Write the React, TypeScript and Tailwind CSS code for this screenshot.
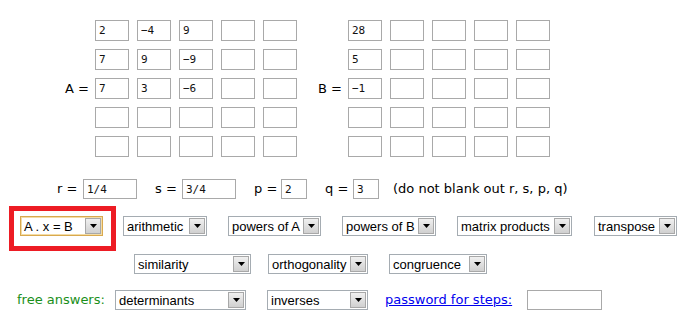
import React from 'react';

const labelFont = "font-['DejaVu_Sans',Verdana,sans-serif]";
const boxFont = "font-['DejaVu_Sans_Mono','Liberation_Mono',monospace]";
const selectFont = "font-['Liberation_Sans',Arial,sans-serif]";

const matA = [
  ['2', '−4', '9', '', ''],
  ['7', '9', '−9', '', ''],
  ['7', '3', '−6', '', ''],
  ['', '', '', '', ''],
  ['', '', '', '', ''],
];

const matB = [
  ['28', '', '', '', ''],
  ['5', '', '', '', ''],
  ['−1', '', '', '', ''],
  ['', '', '', '', ''],
  ['', '', '', '', ''],
];

function Box({ value, className }: { value: string; className: string }) {
  return (
    <input
      readOnly
      defaultValue={value}
      className={`${className} h-[21px] border border-[#a9a9a9] bg-white px-[3px] text-[11px] text-[#111] outline-none ${boxFont}`}
    />
  );
}

function Matrix({ label, values }: { label: string; values: string[][] }) {
  return (
    <div className="flex items-center">
      <span className={`w-[30px] text-[13px] text-black ${labelFont}`}>{label}</span>
      <div className="grid grid-cols-5 gap-x-[8px] gap-y-[8px]">
        {values.flat().map((v, i) => (
          <Box key={i} value={v} className="w-[34px]" />
        ))}
      </div>
    </div>
  );
}

function Select({ label, width, focused }: { label: string; width: string; focused?: boolean }) {
  return (
    <div
      className={`${width} h-[20px] flex items-center justify-between bg-white border ${
        focused ? 'border-[#d9a94e] shadow-[inset_0_0_0_1px_#f3dca6]' : 'border-[#a5acb2]'
      }`}
    >
      <span className={`pl-[3px] text-[13px] leading-none text-black whitespace-nowrap ${selectFont}`}>{label}</span>
      <div className="mr-[1px] w-[16px] h-[16px] flex items-center justify-center border border-[#a8a8a8] bg-gradient-to-b from-[#f0f0f0] to-[#d0d0d0]">
        <svg width="7" height="4" viewBox="0 0 7 4">
          <path d="M0 0h7L3.5 4z" fill="#000" />
        </svg>
      </div>
    </div>
  );
}

function Field({ width, value }: { width: string; value: string }) {
  return (
    <input
      readOnly
      defaultValue={value}
      className={`${width} h-[20px] border border-[#a9a9a9] bg-white px-[3px] text-[11px] text-[#111] outline-none ${boxFont}`}
    />
  );
}

export default function App() {
  return (
    <div className={`w-[686px] h-[331px] bg-white overflow-hidden ${labelFont}`}>
      {/* matrices */}
      <div className="flex pt-[20px] pl-[65px]">
        <Matrix label="A =" values={matA} />
        <div className="ml-[21px]">
          <Matrix label="B =" values={matB} />
        </div>
      </div>

      {/* r, s, p, q */}
      <div className="mt-[22px] pl-[57px] flex items-center h-[20px] text-[13px] text-black">
        <span className="w-[26px]">r =</span>
        <Field width="w-[54px]" value="1/4" />
        <span className="ml-[18px] w-[27px]">s =</span>
        <Field width="w-[54px]" value="3/4" />
        <span className="ml-[18px] w-[27px]">p =</span>
        <Field width="w-[26px]" value="2" />
        <span className="ml-[18px] w-[28px]">q =</span>
        <Field width="w-[26px]" value="3" />
        <span className="ml-[14px] whitespace-nowrap">(do not blank out r, s, p, q)</span>
      </div>

      {/* first row of menus */}
      <div className="mt-[7px] flex items-start">
        <div className="ml-[9px] w-[107px] h-[45px] border-[5px] border-[#ed1c24] pt-[5px] pl-[6px]">
          <Select label="A . x = B" width="w-[83px]" focused />
        </div>
        <div className="ml-[7px] mt-[10px] flex items-center gap-[21px]">
          <Select label="arithmetic" width="w-[84px]" />
          <Select label="powers of A" width="w-[93px]" />
          <Select label="powers of B" width="w-[94px]" />
          <Select label="matrix products" width="w-[115px]" />
          <div className="ml-[1px]">
            <Select label="transpose" width="w-[83px]" />
          </div>
        </div>
      </div>

      {/* second row */}
      <div className="mt-[3px] pl-[134px] flex items-center">
        <Select label="similarity" width="w-[117px]" />
        <div className="ml-[17px]">
          <Select label="orthogonality" width="w-[100px]" />
        </div>
        <div className="ml-[21px]">
          <Select label="congruence" width="w-[98px]" />
        </div>
      </div>

      {/* free answers */}
      <div className="mt-[16px] pl-[17px] flex items-center text-[13px]">
        <span className="w-[98px] text-[#1a8f1a] whitespace-nowrap">free answers:</span>
        <Select label="determinants" width="w-[131px]" />
        <div className="ml-[21px]">
          <Select label="inverses" width="w-[101px]" />
        </div>
        <a href="#" className="ml-[17px] w-[142px] text-[#0000ee] underline whitespace-nowrap">
          password for steps:
        </a>
        <Field width="w-[75px]" value="" />
      </div>
    </div>
  );
}
